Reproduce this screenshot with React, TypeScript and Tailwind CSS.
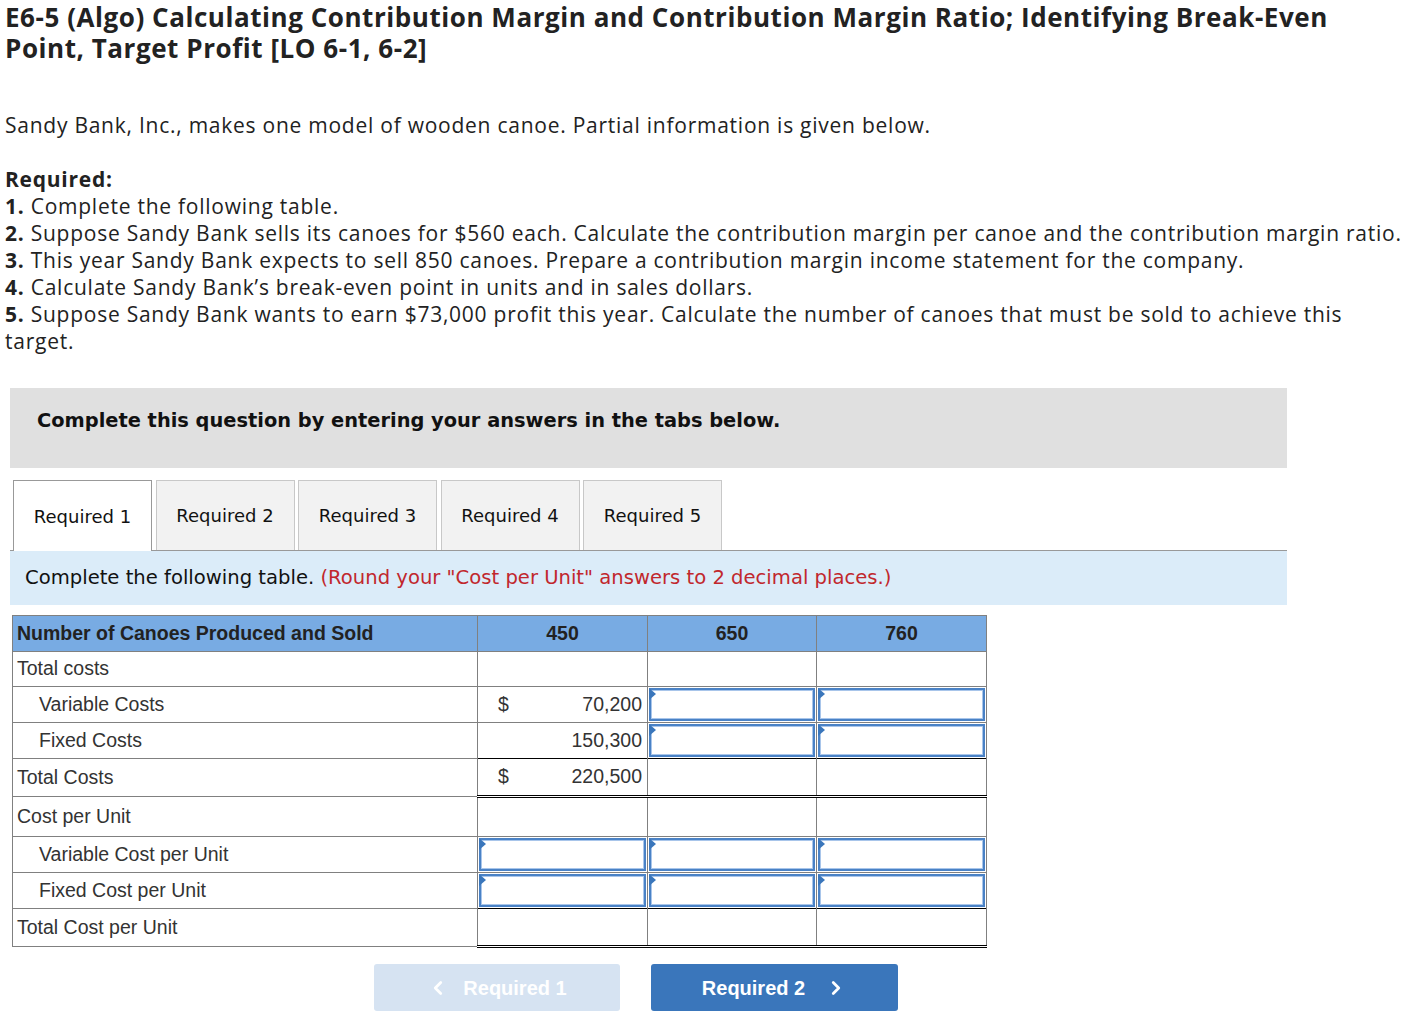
import { ChevronLeft, ChevronRight } from 'lucide-react';

const tabs = ['Required 1', 'Required 2', 'Required 3', 'Required 4', 'Required 5'];

function InputCell({ bottom = 'border-b border-b-[#808080]' }: { bottom?: string }) {
  return (
    <td className={`p-0 border-x border-x-[#808080] ${bottom}`}>
      <div className="relative h-[35px] p-px">
        <div className="h-full border-2 border-[#4a82c6] shadow-[inset_0_0_0_1px_#a8c5ea] bg-white" />
        <div className="absolute left-px top-px w-0 h-0 border-y-[6px] border-y-transparent border-l-[7px] border-l-[#3a76bb]" />
      </div>
    </td>
  );
}

function EmptyCell({ bottom = 'border-b border-b-[#808080]' }: { bottom?: string }) {
  return <td className={`border-x border-x-[#808080] ${bottom}`} />;
}

function Label({ text, indent = false }: { text: string; indent?: boolean }) {
  return (
    <td className={`border border-[#808080] ${indent ? 'pl-[26px]' : 'pl-[4px]'} text-[19.5px] text-[#333]`}>
      {text}
    </td>
  );
}

function Amount({ dollar, value, bottom }: { dollar?: boolean; value: string; bottom: string }) {
  return (
    <td className={`border-x border-x-[#808080] ${bottom} px-[5px] text-[19.5px] text-[#333]`}>
      <div className="flex justify-between pl-[15px]">
        <span>{dollar ? '$' : ''}</span>
        <span>{value}</span>
      </div>
    </td>
  );
}

export default function App() {
  const black = 'border-b border-b-black';
  const dbl = 'border-b-[3px] border-double border-b-black';

  return (
    <div className="w-[1423px] min-h-[1018px] bg-white text-[#222]">
      <h1 className="pl-[5px] pt-[2px] text-[26px] tracking-[0.55px] leading-[31px] font-bold font-['Open_Sans',sans-serif] text-[#222]">
        <div>E6-5 (Algo) Calculating Contribution Margin and Contribution Margin Ratio; Identifying Break-Even</div>
        <div>Point, Target Profit [LO 6-1, 6-2]</div>
      </h1>

      <div className="pl-[5px] mt-[48px] text-[21px] tracking-[0.75px] leading-[27px] font-['Open_Sans',sans-serif] text-[#222]">
        <p>Sandy Bank, Inc., makes one model of wooden canoe. Partial information is given below.</p>
        <p className="mt-[27px] font-bold">Required:</p>
        <p>
          <b>1.</b> Complete the following table.
        </p>
        <p className="whitespace-nowrap">
          <b>2.</b> Suppose Sandy Bank sells its canoes for $560 each. Calculate the contribution margin per canoe and the contribution margin ratio.
        </p>
        <p>
          <b>3.</b> This year Sandy Bank expects to sell 850 canoes. Prepare a contribution margin income statement for the company.
        </p>
        <p>
          <b>4.</b> Calculate Sandy Bank’s break-even point in units and in sales dollars.
        </p>
        <p>
          <span className="whitespace-nowrap">
            <b>5.</b> Suppose Sandy Bank wants to earn $73,000 profit this year. Calculate the number of canoes that must be sold to achieve this
          </span>
          <br />
          target.
        </p>
      </div>

      <div className="ml-[10px] mt-[33px] w-[1277px] h-[80px] bg-[#e0e0e0] flex items-center pl-[27px] pb-[14px]">
        <span className="text-[19.4px] font-bold font-['DejaVu_Sans',sans-serif] text-[#111]">
          Complete this question by entering your answers in the tabs below.
        </span>
      </div>

      <div className="ml-[10px] mt-[12px] w-[1277px] border-b border-[#999] flex gap-[3.5px] pl-[3px] font-['DejaVu_Sans',sans-serif]">
        {tabs.map((t, i) => (
          <div
            key={t}
            className={`w-[139px] flex items-center justify-center text-[18px] text-[#111] border border-b-0 ${
              i === 0 ? 'bg-white border-[#999] -mb-px h-[71px]' : 'bg-[#f2f2f2] border-[#c8c8c8] h-[70px]'
            }`}
          >
            {t}
          </div>
        ))}
      </div>

      <div className="ml-[10px] w-[1277px] h-[54px] bg-[#dbecf9] flex items-center pl-[15px] text-[19.6px] font-['DejaVu_Sans',sans-serif] text-[#111]">
        Complete the following table.&nbsp;
        <span className="text-[#c1272d]">(Round your "Cost per Unit" answers to 2 decimal places.)</span>
      </div>

      <table className="ml-[12px] mt-[10px] w-[974px] table-fixed border-collapse font-['Liberation_Sans',Arial,sans-serif]">
        <colgroup>
          <col className="w-[465px]" />
          <col className="w-[170px]" />
          <col className="w-[169px]" />
          <col className="w-[170px]" />
        </colgroup>
        <thead>
          <tr className="h-[36px] bg-[#78abe3] text-[19.5px] font-bold text-[#222]">
            <th className="border border-[#808080] text-left pl-[4px]">Number of Canoes Produced and Sold</th>
            <th className="border border-[#808080]">450</th>
            <th className="border border-[#808080]">650</th>
            <th className="border border-[#808080]">760</th>
          </tr>
        </thead>
        <tbody>
          <tr className="h-[35px]">
            <Label text="Total costs" />
            <EmptyCell />
            <EmptyCell />
            <EmptyCell />
          </tr>
          <tr className="h-[36px]">
            <Label text="Variable Costs" indent />
            <Amount dollar value="70,200" bottom="border-b border-b-[#808080]" />
            <InputCell />
            <InputCell />
          </tr>
          <tr className="h-[36px]">
            <Label text="Fixed Costs" indent />
            <Amount value="150,300" bottom={black} />
            <InputCell bottom={black} />
            <InputCell bottom={black} />
          </tr>
          <tr className="h-[38px]">
            <Label text="Total Costs" />
            <Amount dollar value="220,500" bottom={dbl} />
            <EmptyCell bottom={dbl} />
            <EmptyCell bottom={dbl} />
          </tr>
          <tr className="h-[40px]">
            <Label text="Cost per Unit" />
            <EmptyCell />
            <EmptyCell />
            <EmptyCell />
          </tr>
          <tr className="h-[36px]">
            <Label text="Variable Cost per Unit" indent />
            <InputCell />
            <InputCell />
            <InputCell />
          </tr>
          <tr className="h-[36px]">
            <Label text="Fixed Cost per Unit" indent />
            <InputCell bottom={black} />
            <InputCell bottom={black} />
            <InputCell bottom={black} />
          </tr>
          <tr className="h-[38px]">
            <Label text="Total Cost per Unit" />
            <EmptyCell bottom={dbl} />
            <EmptyCell bottom={dbl} />
            <EmptyCell bottom={dbl} />
          </tr>
        </tbody>
      </table>

      <div className="ml-[374px] mt-[16px] flex gap-[31px] font-['Liberation_Sans',Arial,sans-serif]">
        <button className="w-[246px] h-[47px] rounded-[3px] bg-[#d6e3f2] text-white text-[20px] font-bold flex items-center justify-center gap-[14px]">
          <ChevronLeft size={22} strokeWidth={3} />
          Required 1
        </button>
        <button className="w-[247px] h-[47px] rounded-[3px] bg-[#3a76bb] text-white text-[20px] font-bold flex items-center justify-center gap-[20px]">
          Required 2
          <ChevronRight size={22} strokeWidth={3} />
        </button>
      </div>
    </div>
  );
}
